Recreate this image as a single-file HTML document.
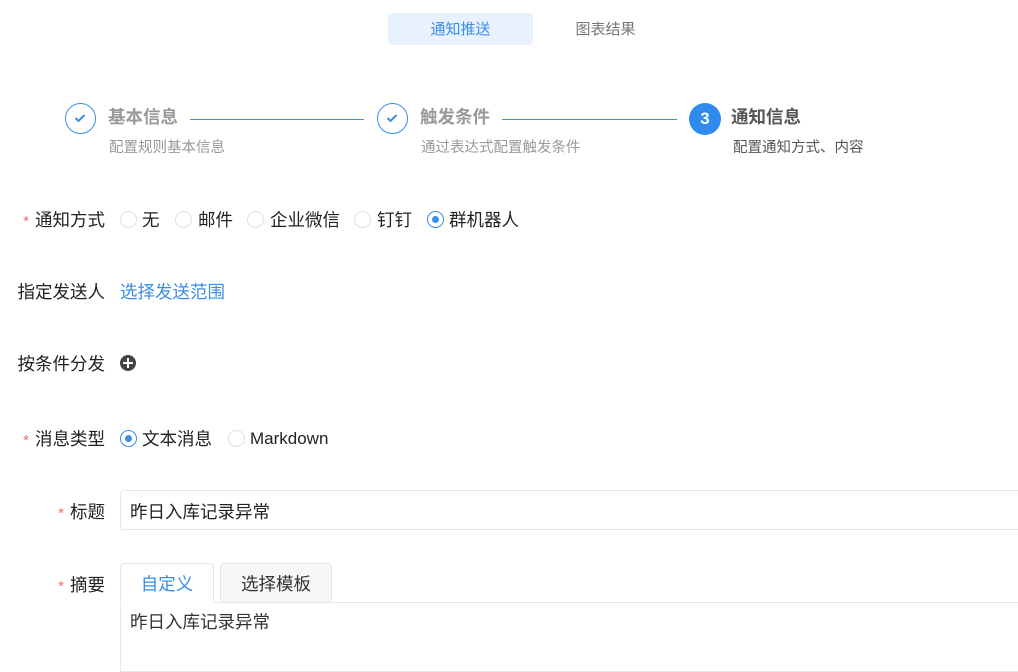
<!DOCTYPE html><html><head><meta charset="utf-8"><style>
body{margin:0;width:1018px;height:661px;overflow:hidden;background:#fff;font-family:"Liberation Sans","Noto Sans CJK SC",sans-serif;position:relative;color:#222}
.a{position:absolute;white-space:nowrap}
.c{position:absolute;width:31px;height:31px;border:1.5px solid #3a8ee6;border-radius:50%;box-sizing:border-box}
.ln{position:absolute;height:1px;background:#3a8ee6;top:119px}
.st{font-size:17.5px;line-height:24px;font-weight:bold;color:#999;top:105px}
.sd{font-size:14.5px;line-height:20px;color:#999;top:138px}
.lb{font-size:17.5px;line-height:20px;color:#222;right:913px;text-align:right}
.req{color:#f56c6c;font-size:15px;margin-right:6px}
.r{position:absolute;width:17px;height:17px;border:1px solid #dcdfe6;border-radius:50%;box-sizing:border-box}
.r.on{border:1.5px solid #3a8ee6}
.r.on::after{content:"";position:absolute;left:3.5px;top:3.5px;width:7px;height:7px;border-radius:50%;background:#3a8ee6}
.t{font-size:17.5px;line-height:20px}
</style></head><body>
<div class="a" style="left:388px;top:13px;width:145px;height:32px;background:#e8f1fd;border-radius:4px"></div>
<div class="a" style="left:388px;top:20px;width:145px;text-align:center;font-size:15px;line-height:20px;color:#3a8ee6">通知推送</div>
<div class="a" style="left:533px;top:20px;width:145px;text-align:center;font-size:15px;line-height:20px;color:#777">图表结果</div>

<div class="c" style="left:65px;top:103px"><svg width="28" height="28" viewBox="0 0 28 28"><path d="M9.5 14l3 3 6-6" stroke="#3a8ee6" stroke-width="2" fill="none"/></svg></div>
<div class="a st" style="left:108px">基本信息</div><div class="a sd" style="left:109px">配置规则基本信息</div>
<div class="ln" style="left:190px;width:174px"></div>
<div class="c" style="left:377px;top:103px"><svg width="28" height="28" viewBox="0 0 28 28"><path d="M9.5 14l3 3 6-6" stroke="#3a8ee6" stroke-width="2" fill="none"/></svg></div>
<div class="a st" style="left:420px">触发条件</div><div class="a sd" style="left:421px">通过表达式配置触发条件</div>
<div class="ln" style="left:502px;width:175px"></div>
<div class="a" style="left:689px;top:103px;width:32px;height:32px;border-radius:50%;background:#2f8cee;color:#fff;font-size:17px;font-weight:bold;text-align:center;line-height:32px">3</div>
<div class="a st" style="left:731px;color:#555">通知信息</div><div class="a sd" style="left:733px;color:#555">配置通知方式、内容</div>

<div class="a lb" style="top:210px"><span class="req">*</span>通知方式</div>
<div class="r" style="left:120px;top:211px"></div><div class="a t" style="left:142px;top:210px">无</div>
<div class="r" style="left:175px;top:211px"></div><div class="a t" style="left:198px;top:210px">邮件</div>
<div class="r" style="left:247px;top:211px"></div><div class="a t" style="left:270px;top:210px">企业微信</div>
<div class="r" style="left:354px;top:211px"></div><div class="a t" style="left:377px;top:210px">钉钉</div>
<div class="r on" style="left:427px;top:211px"></div><div class="a t" style="left:449px;top:210px">群机器人</div>

<div class="a lb" style="top:282px">指定发送人</div>
<div class="a t" style="left:120px;top:282px;color:#3a8ee6">选择发送范围</div>
<div class="a lb" style="top:354px">按条件分发</div>
<div class="a" style="left:120px;top:355px;width:16px;height:16px;border-radius:50%;background:#444"></div>
<div class="a" style="left:123px;top:362px;width:10px;height:2px;background:#fff"></div>
<div class="a" style="left:127px;top:358px;width:2px;height:10px;background:#fff"></div>

<div class="a lb" style="top:429px"><span class="req">*</span>消息类型</div>
<div class="r on" style="left:120px;top:430px"></div><div class="a t" style="left:142px;top:429px">文本消息</div>
<div class="r" style="left:228px;top:430px"></div><div class="a" style="left:250px;top:429px;font-size:17px;line-height:20px">Markdown</div>

<div class="a lb" style="top:502px"><span class="req">*</span>标题</div>
<div class="a" style="left:120px;top:490px;width:910px;height:40px;border:1px solid #e4e7ed;border-radius:4px;box-sizing:border-box"></div>
<div class="a t" style="left:130px;top:502px">昨日入库记录异常</div>

<div class="a lb" style="top:575px"><span class="req">*</span>摘要</div>
<div class="a" style="left:120px;top:602px;width:910px;height:70px;border:1px solid #e4e7ed;box-sizing:border-box"></div>
<div class="a" style="left:120px;top:563px;width:94px;height:40px;border:1px solid #e4e7ed;border-bottom:1px solid #fff;border-radius:4px 4px 0 0;box-sizing:border-box;background:#fff;text-align:center;line-height:41px;font-size:17.5px;color:#3a8ee6">自定义</div>
<div class="a" style="left:220px;top:563px;width:112px;height:40px;border:1px solid #e4e7ed;border-radius:4px 4px 0 0;box-sizing:border-box;background:#f7f7f7;text-align:center;line-height:41px;font-size:17.5px;color:#333">选择模板</div>
<div class="a t" style="left:130px;top:612px;color:#333">昨日入库记录异常</div>
</body></html>
